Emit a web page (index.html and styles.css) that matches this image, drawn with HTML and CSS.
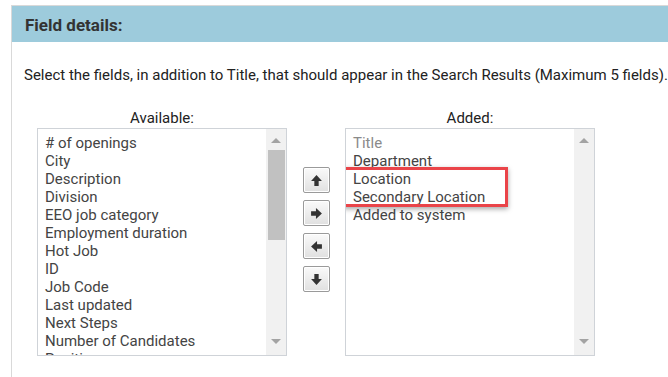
FILE: index.html
```html
<!DOCTYPE html>
<html>
<head>
<meta charset="utf-8">
<link rel="stylesheet" href="styles.css">
</head>
<body>
<div class="panel">
  <div class="header">Field details:</div>
  <div class="content">
    <p class="intro">Select the fields, in addition to Title, that should appear in the Search Results (Maximum 5 fields).</p>
    <div class="picker">
      <div class="col">
        <div class="label">Available:</div>
        <div class="listbox">
          <div class="items">
            <div class="item">&#35; of openings</div>
            <div class="item">City</div>
            <div class="item">Description</div>
            <div class="item">Division</div>
            <div class="item">EEO job category</div>
            <div class="item">Employment duration</div>
            <div class="item">Hot Job</div>
            <div class="item">ID</div>
            <div class="item">Job Code</div>
            <div class="item">Last updated</div>
            <div class="item">Next Steps</div>
            <div class="item">Number of Candidates</div>
            <div class="item">Position</div>
          </div>
          <div class="scrollbar">
            <span class="arr up"></span>
            <span class="thumb"></span>
            <span class="arr down"></span>
          </div>
        </div>
      </div>
      <div class="buttons">
        <button class="btn" title="Move up"><svg width="13" height="13" viewBox="0 0 12 12"><polygon points="6,1 11,6.5 8,6.5 8,11 4,11 4,6.5 1,6.5" fill="#333"/></svg></button>
        <button class="btn" title="Add"><svg width="13" height="13" viewBox="0 0 12 12"><polygon points="11,6 5.5,1 5.5,4 1,4 1,8 5.5,8 5.5,11" fill="#333"/></svg></button>
        <button class="btn" title="Remove"><svg width="13" height="13" viewBox="0 0 12 12"><polygon points="1,6 6.5,1 6.5,4 11,4 11,8 6.5,8 6.5,11" fill="#333"/></svg></button>
        <button class="btn" title="Move down"><svg width="13" height="13" viewBox="0 0 12 12"><polygon points="6,11 11,5.5 8,5.5 8,1 4,1 4,5.5 1,5.5" fill="#333"/></svg></button>
      </div>
      <div class="col">
        <div class="label">Added:</div>
        <div class="listbox">
          <div class="items">
            <div class="item fixed">Title</div>
            <div class="item">Department</div>
            <div class="item">Location</div>
            <div class="item">Secondary Location</div>
            <div class="item">Added to system</div>
          </div>
          <div class="scrollbar">
            <span class="arr up"></span>
            <span class="track"></span>
            <span class="arr down"></span>
          </div>
          <div class="highlight"></div>
        </div>
      </div>
    </div>
  </div>
</div>
</body>
</html>
```
FILE: styles.css
```css
html, body {
  margin: 0;
  padding: 0;
  background: #fff;
}
body {
  font-family: Roboto, "Liberation Sans", Arial, sans-serif;
  color: #222;
  overflow: hidden;
}
.panel {
  margin: 5px 0 0 11px;
  border-top: 1px solid #d9d9d9;
  border-left: 1px solid #d9d9d9;
  min-height: 400px;
}
.header {
  background: #9dcbdc;
  height: 36px;
  line-height: 38px;
  padding-left: 13px;
  font-size: 17px;
  font-weight: bold;
  color: #333;
}
.content {
  padding-left: 12px;
}
.intro {
  margin: 24px 0 0 0;
  font-size: 15px;
  line-height: 18px;
  color: #222;
  white-space: nowrap;
}
.picker {
  display: flex;
  margin-top: 25px;
  margin-left: 13px;
}
.col {
  width: 250px;
  display: flex;
  flex-direction: column;
}
.label {
  text-align: center;
  font-size: 15px;
  line-height: 18px;
  color: #222;
  height: 19px;
}
.listbox {
  position: relative;
  height: 226px;
  border: 1px solid #cfd3d8;
  display: flex;
  overflow: hidden;
  background: #fff;
}
.items {
  flex: 1;
  padding: 5px 0 0 7px;
}
.item {
  font-size: 15px;
  line-height: 18px;
  color: #444;
  white-space: nowrap;
}
.item.fixed {
  color: #8a8a8a;
}
.scrollbar {
  width: 20px;
  background: #f1f1f1;
  display: flex;
  flex-direction: column;
  align-items: center;
}
.arr {
  width: 0;
  height: 0;
  border-left: 5px solid transparent;
  border-right: 5px solid transparent;
}
.arr.up {
  margin-top: 9px;
  border-bottom: 5px solid #a3a3a3;
}
.arr.down {
  margin-bottom: 11px;
  border-top: 5px solid #a3a3a3;
}
.thumb {
  width: 17px;
  height: 90px;
  background: #c1c1c1;
  margin-top: 7px;
}
.thumb + .arr.down {
  margin-top: auto;
}
.track {
  flex: 1;
}
.buttons {
  width: 58px;
  display: flex;
  flex-direction: column;
  align-items: center;
  gap: 7px;
  padding-top: 58px;
}
.btn {
  width: 27px;
  height: 26px;
  padding: 0;
  border: 1px solid #9a9a9a;
  border-radius: 2px;
  background: linear-gradient(#fafafa, #e0e0e0);
  box-shadow: inset 0 0 0 1px #fff;
  display: flex;
  align-items: center;
  justify-content: center;
}
.highlight {
  position: absolute;
  left: -3px;
  top: 38px;
  width: 159px;
  height: 34px;
  border: 3px solid #ea4449;
  box-shadow: 0 2px 5px rgba(0, 0, 0, 0.35);
  pointer-events: none;
}
```
